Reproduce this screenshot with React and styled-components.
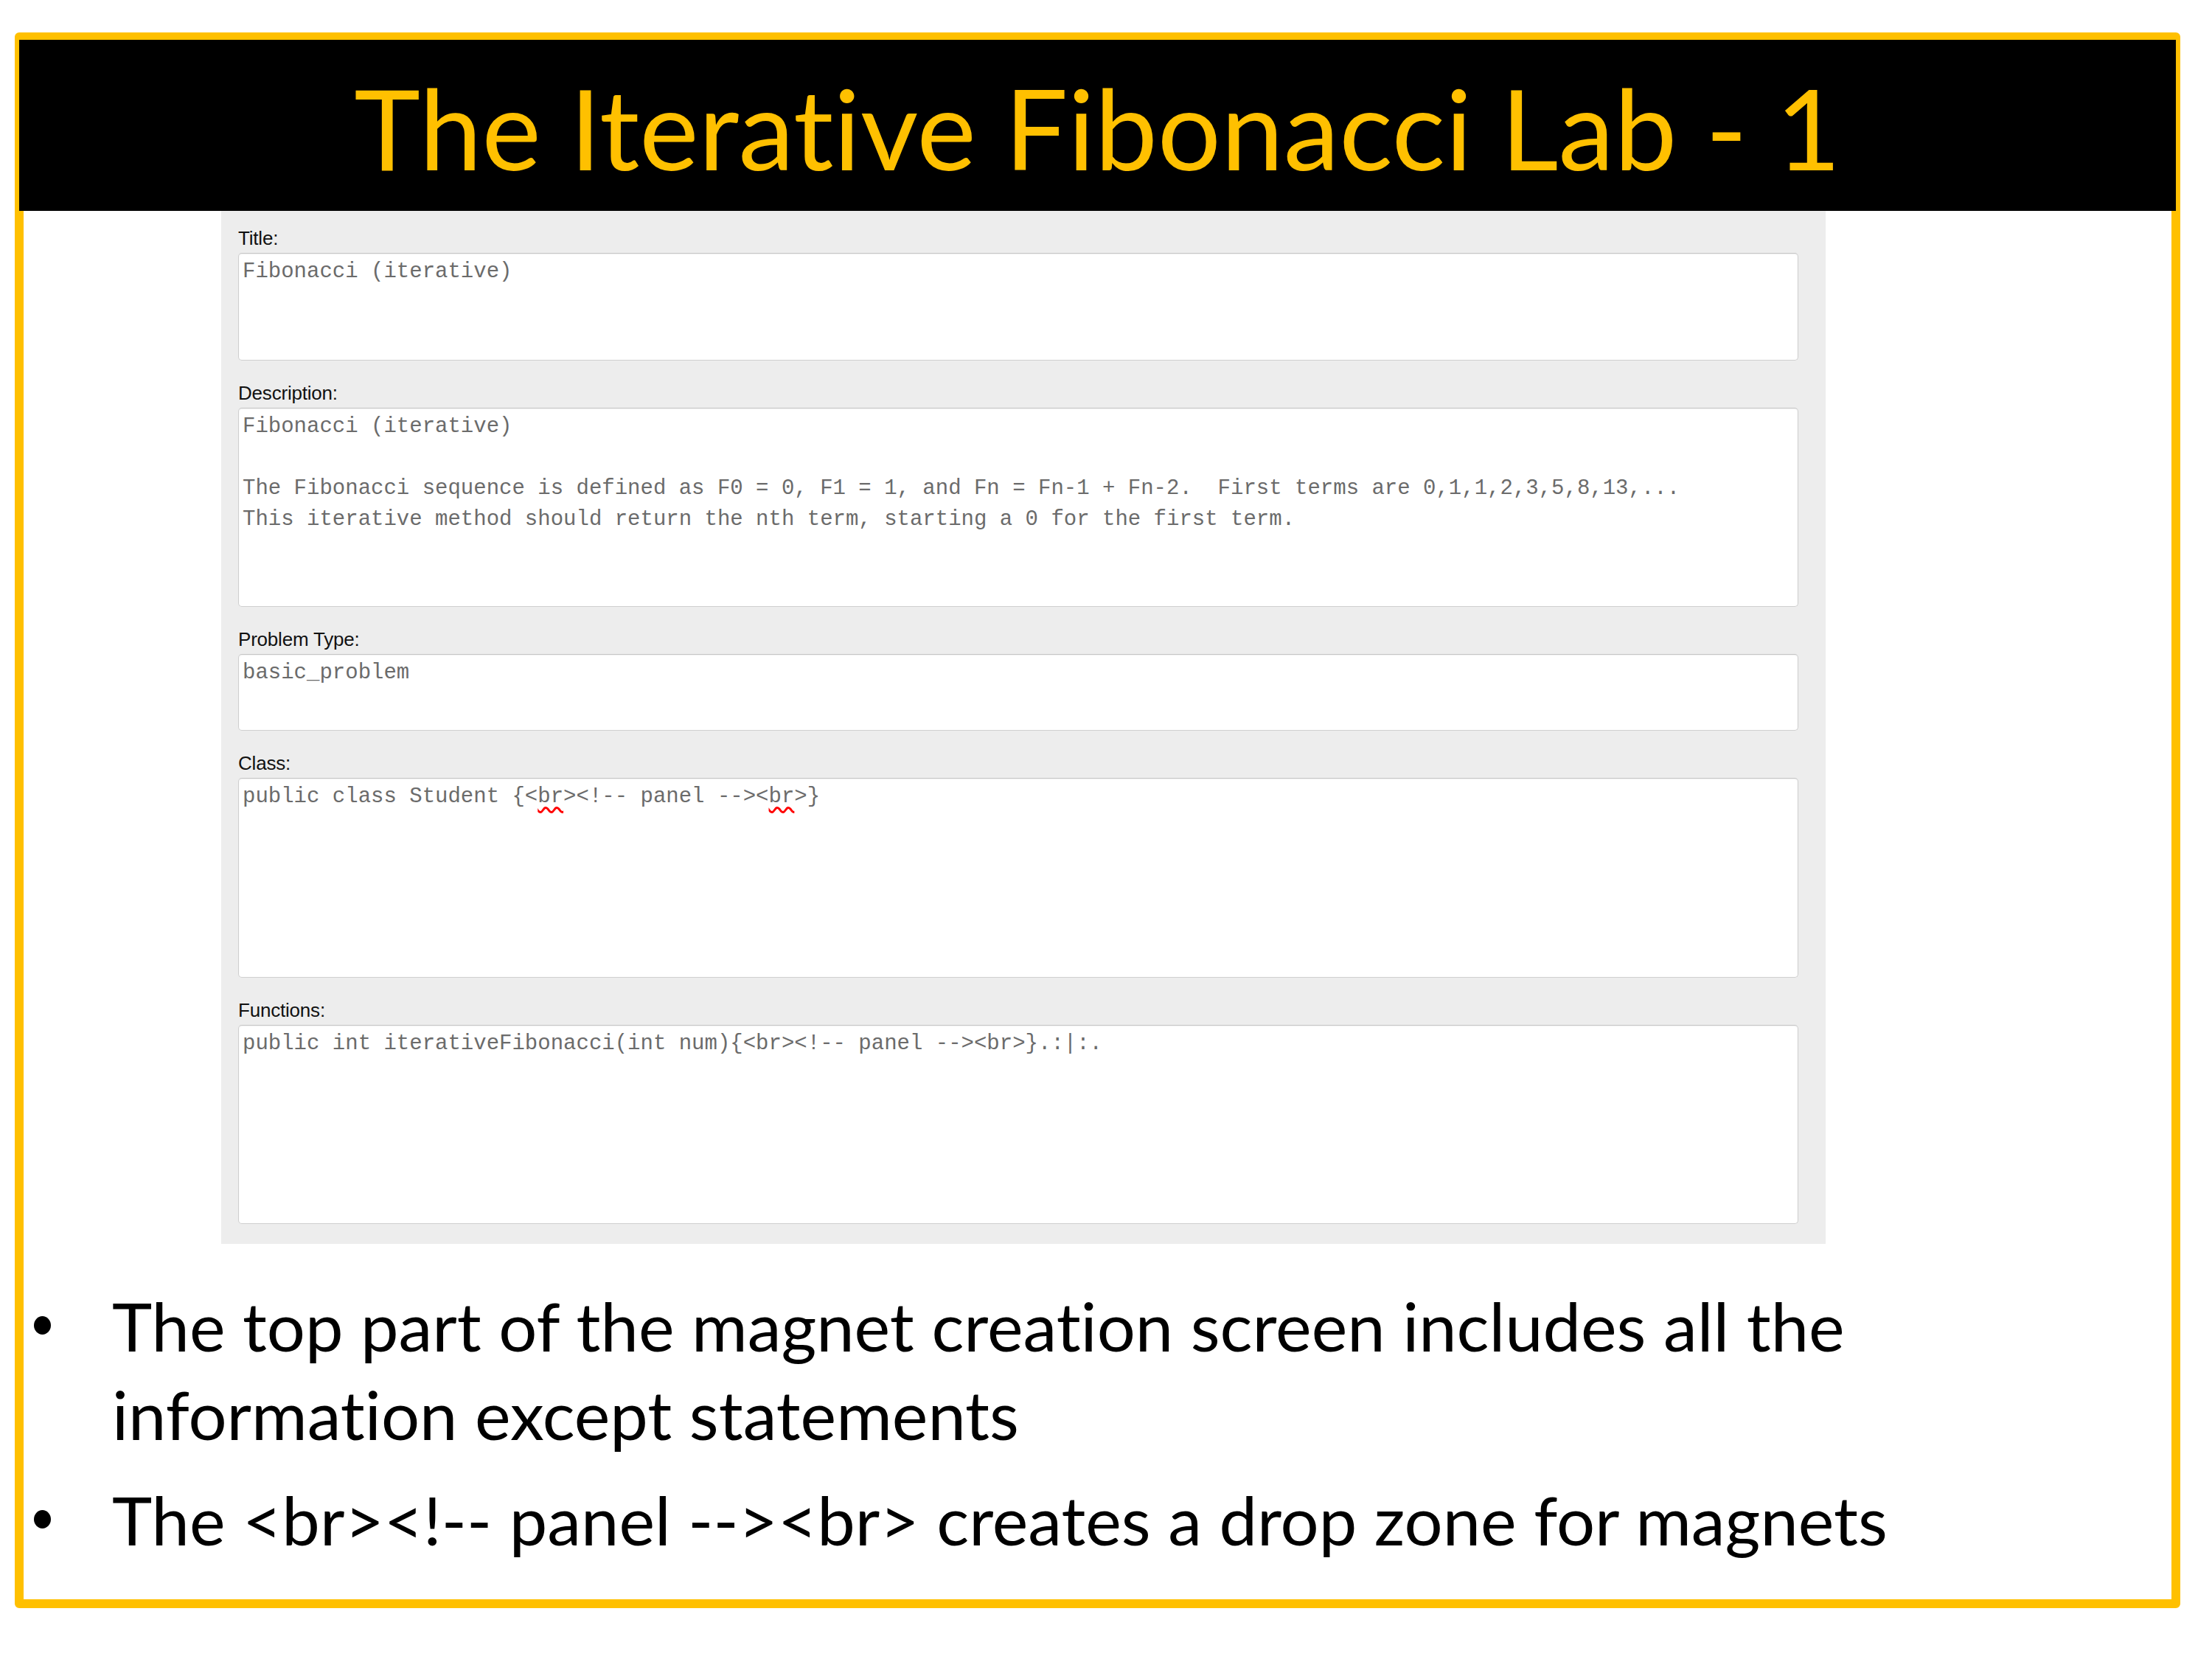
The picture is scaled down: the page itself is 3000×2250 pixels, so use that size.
import React from 'react';
import styled, { createGlobalStyle } from 'styled-components';

const GlobalStyle = createGlobalStyle`
  html, body {
    margin: 0;
    padding: 0;
    background: #ffffff;
  }
  body {
    width: 3000px;
    height: 2250px;
    overflow: hidden;
  }
`;

const fields = [
  { label: 'Title:', height: 146, lines: ['Fibonacci (iterative)'] },
  {
    label: 'Description:',
    height: 270,
    lines: [
      'Fibonacci (iterative)',
      '',
      'The Fibonacci sequence is defined as F0 = 0, F1 = 1, and Fn = Fn-1 + Fn-2.  First terms are 0,1,1,2,3,5,8,13,...',
      'This iterative method should return the nth term, starting a 0 for the first term.',
    ],
  },
  { label: 'Problem Type:', height: 104, lines: ['basic_problem'] },
  { label: 'Class:', height: 271, lines: ['__class__'] },
  {
    label: 'Functions:',
    height: 270,
    lines: ['public int iterativeFibonacci(int num){<br><!-- panel --><br>}.:|:.'],
  },
];

// the two "br" words get the browser's spell-check squiggle in the screenshot
const ClassLine = () => (
  <>
    {'public class Student {<'}
    <Misspelled>br</Misspelled>
    {'><!-- panel --><'}
    <Misspelled>br</Misspelled>
    {'>}'}
  </>
);

const App = () => {
  return (
    <>
      <GlobalStyle />
      <Slide>
        <Header>
          <HeaderTitle>The Iterative Fibonacci Lab - 1</HeaderTitle>
        </Header>
        <Body>
          <FormPanel>
            {fields.map((field) => (
              <Field key={field.label}>
                <FieldLabel>{field.label}</FieldLabel>
                <TextBox $height={field.height}>
                  {field.lines.map((line, i) => (
                    <CodeLine key={i}>
                      {line === '__class__' ? <ClassLine /> : line || '\u00a0'}
                    </CodeLine>
                  ))}
                </TextBox>
              </Field>
            ))}
          </FormPanel>

          <BulletList>
            <BulletItem>
              <BulletText>
                The top part of the magnet creation screen includes all the information except statements
              </BulletText>
            </BulletItem>
            <BulletItem>
              <BulletText>The &lt;br&gt;&lt;!-- panel --&gt;&lt;br&gt; creates a drop zone for magnets</BulletText>
            </BulletItem>
          </BulletList>
        </Body>
      </Slide>
    </>
  );
};

const Slide = styled.div`
  box-sizing: border-box;
  margin: 44px 0 0 20px;
  width: 2937px;
  height: 2137px;
  display: flex;
  flex-direction: column;
  border: 12px solid #ffc000;
  border-top-width: 10px;
  border-radius: 6px;
  background: #ffffff;
`;

const Header = styled.div`
  flex: none;
  height: 232px;
  margin: 0 -6px;
  background: #000000;
  display: flex;
  align-items: center;
  justify-content: center;
`;

const HeaderTitle = styled.h1`
  margin: 0;
  color: #ffc000;
  font-family: Lato, 'Open Sans', sans-serif;
  font-weight: 400;
  font-size: 152px;
  font-variant-ligatures: none;
  line-height: 1;
  padding-top: 4px;
`;

const Body = styled.div`
  flex: 1;
  display: flex;
  flex-direction: column;
`;

const FormPanel = styled.div`
  box-sizing: border-box;
  width: 2176px;
  margin-left: 268px;
  padding: 22px 37px 27px 23px;
  background: #ededed;
  display: flex;
  flex-direction: column;
  gap: 29px;
`;

const Field = styled.div`
  display: flex;
  flex-direction: column;
  gap: 5px;
`;

const FieldLabel = styled.label`
  font-family: 'Liberation Sans', Arial, sans-serif;
  font-size: 26px;
  line-height: 30px;
  color: #111111;
  letter-spacing: -0.2px;
`;

const TextBox = styled.div`
  box-sizing: border-box;
  height: ${(p) => p.$height}px;
  padding: 4px 5px;
  background: #ffffff;
  border: 1px solid #cfcfcf;
  border-top-color: #c4c4c4;
  border-radius: 5px;
  box-shadow: inset 0 1px 2px rgba(0, 0, 0, 0.06);
  overflow: hidden;
`;

const CodeLine = styled.div`
  font-family: 'Liberation Mono', 'Courier New', monospace;
  font-size: 29px;
  line-height: 42px;
  color: #6b6b6b;
  white-space: pre;
`;

const Misspelled = styled.span`
  text-decoration: underline wavy #ff0000;
  text-decoration-thickness: 2.5px;
  text-underline-offset: 6px;
`;

const BulletList = styled.ul`
  list-style: none;
  margin: 51px 0 0;
  padding: 0 40px 0 14px;
  display: flex;
  flex-direction: column;
  gap: 23px;
`;

const BulletItem = styled.li`
  display: flex;
  align-items: flex-start;
  font-family: Lato, 'Open Sans', sans-serif;
  font-size: 92px;
  font-variant-ligatures: none;
  line-height: 120px;
  color: #000000;

  &::before {
    content: '';
    flex: none;
    width: 23px;
    height: 25px;
    margin: 47px 83px 0 0;
    border-radius: 50%;
    background: #000000;
  }
`;

const BulletText = styled.span`
  flex: 1;
`;

export default App;
